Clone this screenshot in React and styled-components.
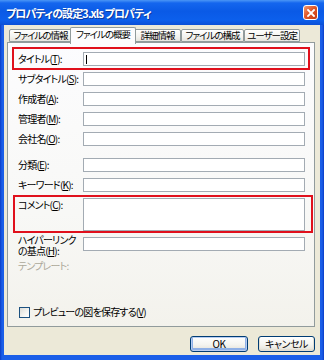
import React from "react";
import styled, { createGlobalStyle } from "styled-components";

const GlobalStyle = createGlobalStyle`
  html, body {
    margin: 0;
    padding: 0;
  }
  body {
    font-family: "Noto Sans CJK JP", "Liberation Sans", sans-serif;
    font-size: 10px;
    letter-spacing: -0.8px;
    font-feature-settings: "palt" 1;
    color: #000;
  }
`;

const TABS = [
  { label: "ファイルの情報", width: 63 },
  { label: "ファイルの概要", width: 66, active: true },
  { label: "詳細情報", width: 47 },
  { label: "ファイルの構成", width: 63 },
  { label: "ユーザー設定", width: 56 },
];

const TOP_FIELDS = [
  { label: "タイトル", key: "T", highlight: true, caret: true },
  { label: "サブタイトル", key: "S" },
  { label: "作成者", key: "A" },
  { label: "管理者", key: "M" },
  { label: "会社名", key: "O" },
];

const BOTTOM_FIELDS = [
  { label: "分類", key: "E" },
  { label: "キーワード", key: "K" },
];

function App() {
  return (
    <>
      <GlobalStyle />
      <Window>
        <TitleBar>
          <TitleText>プロパティの設定3.xls プロパティ</TitleText>
          <CloseButton>
            <svg width="8" height="8" viewBox="0 0 8 8">
              <path d="M1 1 L7 7 M7 1 L1 7" stroke="#fff" strokeWidth="1.8" strokeLinecap="square" />
            </svg>
          </CloseButton>
        </TitleBar>
        <Body>
          <TabStrip>
            {TABS.map((tab) => (
              <Tab key={tab.label} active={tab.active} w={tab.width}>
                {tab.label}
              </Tab>
            ))}
          </TabStrip>
          <Panel>
            <FieldGroup>
              {TOP_FIELDS.map((f) => (
                <Row key={f.key} highlight={f.highlight} frame="-5px -5px -4px -6px">
                  <Label>
                    {f.label}(<u>{f.key}</u>):
                  </Label>
                  <Field>{f.caret && <Caret />}</Field>
                </Row>
              ))}
            </FieldGroup>
            <FieldGroup spaced>
              {BOTTOM_FIELDS.map((f) => (
                <Row key={f.key}>
                  <Label>
                    {f.label}(<u>{f.key}</u>):
                  </Label>
                  <Field />
                </Row>
              ))}
              <Row highlight frame="-3px -8px -2px -5px" top>
                <Label>
                  コメント(<u>C</u>):
                </Label>
                <Field tall={33} />
              </Row>
              <Row top>
                <Label tight>
                  ハイパーリンク
                  <br />
                  の基点(<u>H</u>):
                </Label>
                <Field />
              </Row>
              <Row>
                <Label disabled>テンプレート:</Label>
              </Row>
            </FieldGroup>
            <CheckRow>
              <CheckBox />
              <span>
                プレビューの図を保存する(<u>V</u>)
              </span>
            </CheckRow>
          </Panel>
          <Footer>
            <Button w={58} isDefault>
              OK
            </Button>
            <Button w={57}>キャンセル</Button>
          </Footer>
        </Body>
      </Window>
    </>
  );
}

const Window = styled.div`
  width: 324px;
  height: 360px;
  box-sizing: border-box;
  display: flex;
  flex-direction: column;
  background: linear-gradient(90deg, #0a3cc6 0, #1a5ee8 2px, #1a5ee8 calc(100% - 2px), #0a3cc6 100%);
  padding-bottom: 5px;
`;

const TitleBar = styled.div`
  height: 26px;
  display: flex;
  align-items: center;
  justify-content: space-between;
  padding: 0 6px 0 6px;
  background: linear-gradient(
    180deg,
    #4b96f6 0%,
    #1466ee 12%,
    #0a5ae6 45%,
    #0c5fec 80%,
    #0a4fd6 100%
  );
`;

const TitleText = styled.span`
  color: #fff;
  font-weight: bold;
  font-size: 11px;
  letter-spacing: -0.9px;
  text-shadow: 1px 1px 0 #0b3a9e;
`;

const CloseButton = styled.div`
  width: 13px;
  height: 13px;
  display: flex;
  align-items: center;
  justify-content: center;
  border: 1px solid #fff;
  border-radius: 3px;
  background: linear-gradient(135deg, #f29a72 0%, #e0582a 45%, #c23c14 100%);
`;

const Body = styled.div`
  flex: 1;
  margin: 0 4px;
  background: #ece9d8;
  display: flex;
  flex-direction: column;
  padding: 2px 5px 3px 3px;
`;

const TabStrip = styled.div`
  display: flex;
  align-items: flex-end;
  height: 15px;
  padding-left: 2px;
  position: relative;
  z-index: 1;
`;

const Tab = styled.div`
  width: ${(p) => p.w}px;
  box-sizing: border-box;
  height: ${(p) => (p.active ? 17 : 13)}px;
  margin: ${(p) => (p.active ? "0 -2px -2px -2px" : "0")};
  border: 1px solid #919b9c;
  border-bottom: ${(p) => (p.active ? "none" : "1px solid #919b9c")};
  border-radius: 2px 2px 0 0;
  background: ${(p) =>
    p.active ? "#fcfcfe" : "linear-gradient(180deg, #ffffff 0%, #f3f3ef 60%, #e6e5df 100%)"};
  display: flex;
  align-items: center;
  justify-content: center;
  font-size: 9.5px;
  line-height: 1;
  letter-spacing: -1px;
  white-space: nowrap;
  padding-bottom: ${(p) => (p.active ? 3 : 0)}px;
  z-index: ${(p) => (p.active ? 2 : 1)};
`;

const Panel = styled.div`
  height: 285px;
  box-sizing: border-box;
  border: 1px solid #919b9c;
  background: linear-gradient(180deg, #fcfcfe 0%, #f8f8f6 60%, #f3f2ec 100%);
  display: flex;
  flex-direction: column;
  padding: 9px 9px 8px 10px;
`;

const FieldGroup = styled.div`
  display: flex;
  flex-direction: column;
  gap: 6px;
  margin-top: ${(p) => (p.spaced ? 12 : 0)}px;
`;

const Row = styled.div`
  position: relative;
  display: grid;
  grid-template-columns: 65px 222px;
  align-items: ${(p) => (p.top ? "start" : "center")};
  min-height: 14px;

  &::before {
    content: "";
    display: ${(p) => (p.highlight ? "block" : "none")};
    position: absolute;
    inset: ${(p) => p.frame || "0"};
    border: 2px solid #e0101c;
    pointer-events: none;
  }
`;

const Label = styled.div`
  line-height: ${(p) => (p.tight ? 11 : 14)}px;
  margin: ${(p) => (p.tight ? "-3px 0 -5px" : "0")};
  white-space: nowrap;
  color: ${(p) => (p.disabled ? "#aca899" : "#000")};
  padding-top: ${(p) => (p.disabled ? 2 : 0)}px;
`;

const Field = styled.div`
  height: ${(p) => p.tall || 14}px;
  box-sizing: border-box;
  border: 1px solid #a3abb3;
  background: #fff;
  position: relative;
`;

const Caret = styled.span`
  position: absolute;
  left: 2px;
  top: 2px;
  width: 1px;
  height: 9px;
  background: #000;
`;

const CheckRow = styled.div`
  margin-top: auto;
  display: flex;
  align-items: center;
  gap: 3px;
  padding-left: 1px;
  line-height: 12px;
`;

const CheckBox = styled.span`
  width: 11px;
  height: 11px;
  box-sizing: border-box;
  border: 1px solid #1c5180;
  background: linear-gradient(135deg, #dcdcd7 0%, #f5f5f2 60%, #ffffff 100%);
`;

const Footer = styled.div`
  display: flex;
  justify-content: flex-end;
  gap: 10px;
  margin-top: 9px;
`;

const Button = styled.button`
  width: ${(p) => p.w}px;
  height: 16px;
  padding: 0;
  border: 1px solid #003c74;
  border-radius: 3px;
  background: linear-gradient(180deg, #ffffff 0%, #f4f4f0 55%, #e3e0d6 100%);
  box-shadow: ${(p) =>
    p.isDefault ? "inset 0 0 0 1px #b7cdf2, inset 0 -1px 0 2px #8fb0e6" : "inset 0 -1px 0 1px #e3dfd3"};
  font-family: "Noto Sans CJK JP", "Liberation Sans", sans-serif;
  font-feature-settings: "palt" 1;
  font-size: 10px;
  letter-spacing: -0.5px;
  line-height: 1;
  color: #000;
`;

export default App;
